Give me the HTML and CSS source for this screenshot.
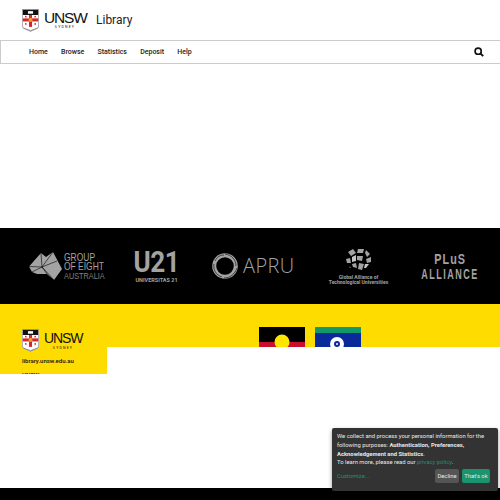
FILE: index.html
```html
<!DOCTYPE html>
<html lang="en">
<head>
    <meta charset="UTF-8">
    <meta name="viewport" content="width=device-width, initial-scale=1.0">
    <title>UNSW Library</title>
    <link rel="stylesheet" href="styles.css">
</head>
<body>
    <svg class="defs" width="0" height="0" aria-hidden="true">
        <symbol id="crest" viewBox="0 0 20 27">
            <path d="M0 0H20V20C20 24 15 24 10 27C5 24 0 24 0 20Z" fill="#a5a5a5"/>
            <path d="M1 1H19V20C19 23 14 23 10 25.500C6 23 1 23 1 20Z" fill="#fff"/>
            <rect x="1" y="1" width="18" height="6" fill="#111"/>
            <rect x="7" y="2.500" width="6" height="3" fill="#fff"/>
            <rect x="8.200" y="7" width="3.600" height="14" fill="#d8232a"/>
            <rect x="1" y="11" width="18" height="3.600" fill="#d8232a"/>
            <circle cx="10" cy="12.800" r="2.400" fill="#e0a526"/>
            <circle cx="4.500" cy="9" r="1" fill="#d8232a"/>
            <circle cx="15.500" cy="9" r="1" fill="#d8232a"/>
            <circle cx="4.500" cy="17.500" r="1" fill="#d8232a"/>
            <circle cx="15.500" cy="17.500" r="1" fill="#d8232a"/>
            <path d="M2 22.500L10 25.500L18 22.500" fill="none" stroke="#8c8c8c" stroke-width="1"/>
        </symbol>
    </svg>

    <header class="site-header">
        <a class="brand">
            <svg class="crest"><use href="#crest"/></svg>
            <span class="wordmark">
                <span class="wordmark-name">UNSW</span>
                <span class="wordmark-city">SYDNEY</span>
            </span>
        </a>
        <span class="site-title">Library</span>
    </header>

    <nav class="main-nav">
        <ul class="nav-links">
            <li>Home</li>
            <li>Browse</li>
            <li>Statistics</li>
            <li>Deposit</li>
            <li>Help</li>
        </ul>
        <svg class="search-icon" viewBox="0 0 12 12">
            <circle cx="5" cy="5" r="3.700" fill="none" stroke="#111" stroke-width="2"/>
            <path d="M7.600 7.600L11 11" stroke="#111" stroke-width="2.400"/>
        </svg>
    </nav>

    <main class="content"></main>

    <section class="partners">
        <div class="partner go8">
            <svg class="go8-map" viewBox="0 0 33 28">
                <path d="M0 14.500L12 1L17 5L24 0L33 17L25 28L18 22L8 22L3 20Z" fill="#a3a3a3"/>
                <path d="M0 14.500L13 15L24 0M13 15L18 22M13 15L25 28M13 15L3 20M12 1L13 15M28 9L13 15" stroke="#000" stroke-width=".6" fill="none"/>
            </svg>
            <div class="go8-text"><span>GROUP</span><span>OF EIGHT</span><span class="thin">AUSTRALIA</span></div>
        </div>
        <div class="partner u21">
            <span class="u21-mark">U21</span>
            <span class="u21-name">UNIVERSITAS 21</span>
        </div>
        <div class="partner apru">
            <svg class="apru-ring" viewBox="0 0 26 26">
                <circle cx="13" cy="13" r="10.800" fill="none" stroke="#a3a3a3" stroke-width="4"/>
                <path d="M13 1C20 2 24 7 24 13M25 15C23 21 18 25 12 25M10 24C4 22 1 17 2 11M3 8C5 4 8 2 12 2" fill="none" stroke="#000" stroke-width=".6"/>
            </svg>
            <span class="apru-name">APRU</span>
        </div>
        <div class="partner gatu">
            <svg class="gatu-globe" viewBox="0 0 27 23">
                <path d="M3 4L8 1L11 5L6 8ZM13 1L19 1L18 5L12 5ZM21 2L25 6L22 9L20 5ZM1 11L5 10L6 15L2 15ZM12 8L18 8L17 13L12 12ZM21 11L26 9L26 14L22 15ZM7 16L11 15L12 20L8 19ZM14 15L19 16L17 22L13 21ZM4 18L6 20L5 20Z" fill="#a3a3a3"/>
                <path d="M7 9L11 7L11 13L7 14ZM20 16L24 16L21 20L19 20Z" fill="#c4c4c4"/>
            </svg>
            <span class="gatu-name">Global Alliance of<br>Technological Universities</span>
        </div>
        <div class="partner plus">
            <span class="plus-top">PLuS</span>
            <span class="plus-bottom">ALLIANCE</span>
        </div>
    </section>

    <footer class="site-footer">
        <div class="footer-info">
            <div class="brand footer-brand">
                <svg class="crest"><use href="#crest"/></svg>
                <span class="wordmark">
                    <span class="wordmark-name">UNSW</span>
                    <span class="wordmark-city">SYDNEY</span>
                </span>
            </div>
            <p class="footer-url">library.unsw.edu.au</p>
            <p class="footer-url footer-next">UNSW</p>
        </div>
        <div class="flags">
            <svg class="flag" viewBox="0 0 46 30">
                <rect width="46" height="15" fill="#000"/>
                <rect y="15" width="46" height="15" fill="#c8102e"/>
                <circle cx="23" cy="15" r="7.500" fill="#ffe600"/>
            </svg>
            <svg class="flag" viewBox="0 0 46 30">
                <rect width="46" height="30" fill="#0a2a9a"/>
                <rect width="46" height="6" fill="#11996b"/>
                <circle cx="22" cy="17" r="7" fill="#fff"/>
                <circle cx="22" cy="17" r="3" fill="#0a2a9a"/>
                <circle cx="22" cy="17" r="1" fill="#fff"/>
            </svg>
        </div>
        <div class="footer-cover"></div>
    </footer>

    <div class="blank"></div>
    <div class="page-end"></div>

    <aside class="cookie-notice">
        <p>We collect and process your personal information for the following purposes: <strong>Authentication, Preferences, Acknowledgement and Statistics</strong>.<br>To learn more, please read our <a class="cookie-link">privacy policy</a>.</p>
        <div class="cookie-actions">
            <a class="cookie-link">Customize...</a>
            <span class="cookie-buttons">
                <button class="btn btn-decline">Decline</button>
                <button class="btn btn-accept">That's ok</button>
            </span>
        </div>
    </aside>
</body>
</html>
```

FILE: styles.css
```css
* {
    margin: 0;
    padding: 0;
    box-sizing: border-box;
}

html, body {
    height: 500px;
    overflow: hidden;
}

body {
    position: relative;
    font-family: Roboto, "Liberation Sans", sans-serif;
    background: #fff;
    color: #111;
}

.defs {
    position: absolute;
}

/* Header */
.site-header {
    height: 40px;
    display: flex;
    align-items: center;
    padding: 0 22px;
}

.brand {
    display: flex;
    align-items: center;
    gap: 5px;
}

.crest {
    width: 17px;
    height: 27px;
}

.wordmark {
    display: flex;
    flex-direction: column;
    align-items: flex-start;
    width: 42px;
}

.wordmark-name {
    font-family: "Liberation Sans", sans-serif;
    font-size: 15.500px;
    line-height: 15px;
    letter-spacing: -1.200px;
}

.wordmark-city {
    align-self: center;
    font-size: 3.500px;
    line-height: 5px;
    letter-spacing: 1.200px;
}

.footer-brand .wordmark {
    width: 38px;
}

.footer-brand .wordmark-name {
    font-size: 14px;
    letter-spacing: -1.100px;
}

.site-title {
    margin-left: 10px;
    font-size: 12px;
    color: #222;
}

/* Main navigation */
.main-nav {
    height: 24px;
    display: flex;
    align-items: center;
    justify-content: space-between;
    padding: 0 16px 0 28px;
    border: 1px solid #ccc;
    border-right: 0;
}

.nav-links {
    display: flex;
    gap: 13.200px;
    list-style: none;
    font-size: 7px;
    font-weight: 500;
    color: #222;
}

.search-icon {
    width: 10px;
    height: 10px;
}

.content {
    height: 164px;
}

/* Partner logos */
.partners {
    height: 76px;
    background: #000;
    display: flex;
    align-items: center;
    gap: 33.500px;
    padding-left: 29px;
    color: #a3a3a3;
}

.partner {
    flex: none;
}

.go8 {
    width: 72px;
    display: flex;
    align-items: center;
    gap: 2px;
}

.go8-map {
    flex: none;
    width: 33px;
    height: 28px;
}

.go8-text {
    flex: none;
    width: 37px;
    display: flex;
    flex-direction: column;
    font-family: "Liberation Sans", sans-serif;
    font-size: 11px;
    line-height: 9px;
    white-space: nowrap;
    transform: scaleX(0.77);
    transform-origin: left center;
}

.go8-text .thin {
    font-size: 9.500px;
    color: #808080;
}

.u21 {
    width: 44px;
    display: flex;
    flex-direction: column;
    align-items: center;
}

.u21-mark {
    font-size: 29px;
    line-height: 24px;
    font-weight: 700;
    letter-spacing: -0.5px;
    transform: scaleX(0.9);
}

.u21-name {
    margin-top: 3px;
    font-size: 5.500px;
    line-height: 6px;
    font-weight: 700;
    white-space: nowrap;
}

.apru {
    width: 83px;
    display: flex;
    align-items: center;
    gap: 5px;
}

.apru-ring {
    width: 26px;
    height: 26px;
}

.apru-name {
    font-family: "Open Sans", sans-serif;
    font-size: 20px;
    line-height: 26px;
    font-weight: 300;
    letter-spacing: 0.4px;
}

.gatu {
    width: 60px;
    display: flex;
    flex-direction: column;
    align-items: center;
    gap: 4px;
}

.gatu-globe {
    width: 27px;
    height: 23px;
}

.gatu-name {
    font-size: 5px;
    line-height: 5px;
    font-weight: 700;
    text-align: center;
    white-space: nowrap;
}

.plus {
    width: 56px;
    display: flex;
    flex-direction: column;
    align-items: center;
    gap: 1px;
    font-family: "Liberation Sans", sans-serif;
    font-weight: 700;
    white-space: nowrap;
}

.plus-top {
    font-size: 15px;
    line-height: 14px;
    letter-spacing: 1.500px;
    transform: scaleX(0.72);
}

.plus-bottom {
    font-size: 15px;
    line-height: 14px;
    letter-spacing: 2.500px;
    transform: scaleX(0.6);
}

/* Yellow footer, mostly hidden by the white panel over it */
.site-footer {
    position: relative;
    height: 70px;
    overflow: hidden;
    background: #ffdc00;
    display: flex;
    padding: 23px 0 0 22px;
}

.footer-info {
    width: 237px;
    flex: none;
}

.footer-url {
    margin-top: 2px;
    font-size: 6px;
    line-height: 9px;
    font-weight: 500;
}

.footer-next {
    margin-top: 5px;
}

.flags {
    display: flex;
    gap: 10px;
}

.flag {
    width: 46px;
    height: 30px;
}

.footer-cover {
    position: absolute;
    left: 107px;
    right: 0;
    top: 43px;
    bottom: 0;
    background: #fff;
}

.blank {
    height: 114px;
}

.page-end {
    height: 12px;
    background: #000;
}

/* Cookie notice */
.cookie-notice {
    position: absolute;
    right: 2px;
    bottom: 9px;
    width: 166px;
    height: 63px;
    padding: 4px 5px;
    background: #333;
    border-radius: 2px;
    box-shadow: 0 2px 4px rgba(0, 0, 0, 0.4);
    color: #e8e8e8;
    font-size: 5.850px;
    line-height: 8.800px;
}

.cookie-link {
    color: #1a936f;
}

.cookie-actions {
    display: flex;
    align-items: center;
    justify-content: space-between;
    margin-top: 2px;
}

.cookie-buttons {
    display: flex;
    gap: 3px;
    margin-right: 3px;
}

.btn {
    height: 14px;
    border: 0;
    border-radius: 2px;
    font-family: inherit;
    font-size: 5.850px;
    white-space: nowrap;
    color: #e8e8e8;
}

.btn-decline {
    width: 24px;
    background: #555;
}

.btn-accept {
    width: 28px;
    background: #1a936f;
}
```
